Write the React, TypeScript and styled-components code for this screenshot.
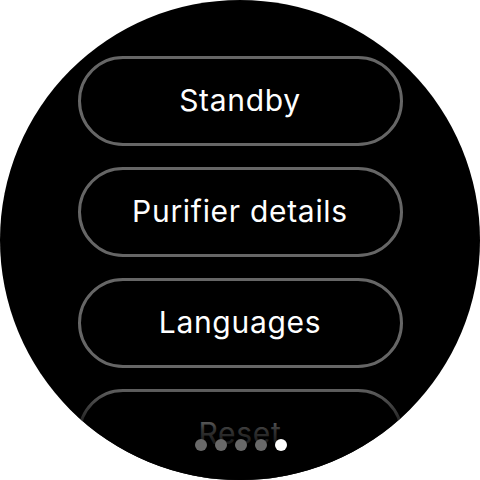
import React from "react";
import styled, { createGlobalStyle } from "styled-components";

const GlobalStyle = createGlobalStyle`
  html, body {
    margin: 0;
    padding: 0;
    background: #ffffff;
  }
`;

const Screen = styled.div`
  position: relative;
  width: 480px;
  height: 480px;
  border-radius: 50%;
  background: #000000;
  overflow: hidden;
  font-family: Inter, "Liberation Sans", sans-serif;
`;

const List = styled.div`
  display: flex;
  flex-direction: column;
  align-items: center;
  gap: 21px;
  padding-top: 56px;
`;

const Pill = styled.button`
  box-sizing: border-box;
  width: 325px;
  height: 90px;
  flex-shrink: 0;
  border: 3px solid #666666;
  border-radius: 45px;
  background: transparent;
  color: #ffffff;
  font-family: inherit;
  font-size: 30px;
  font-weight: 400;
  letter-spacing: 0.7px;
  padding: 0 0 2px;
  display: flex;
  align-items: center;
  justify-content: center;
  cursor: pointer;
`;

const Fade = styled.div`
  position: absolute;
  left: 0;
  right: 0;
  top: 385px;
  bottom: 0;
  background: linear-gradient(to bottom, rgba(0, 0, 0, 0) 0px, rgba(0, 0, 0, 0.8) 45px, #000000 72px);
  pointer-events: none;
`;

const Dots = styled.div`
  position: absolute;
  left: 0;
  right: 0;
  top: 439px;
  display: flex;
  justify-content: center;
  gap: 8px;
  padding-left: 1px;
`;

const Dot = styled.span<{ $active?: boolean }>`
  width: 12px;
  height: 12px;
  border-radius: 50%;
  background: ${(p) => (p.$active ? "#ffffff" : "#696969")};
`;

const items = ["Standby", "Purifier details", "Languages", "Reset"];

const App: React.FC = () => {
  return (
    <>
      <GlobalStyle />
      <Screen>
        <List>
          {items.map((label) => (
            <Pill key={label}>{label}</Pill>
          ))}
        </List>
        <Fade />
        <Dots>
          {[0, 1, 2, 3, 4].map((i) => (
            <Dot key={i} $active={i === 4} />
          ))}
        </Dots>
      </Screen>
    </>
  );
};

export default App;
